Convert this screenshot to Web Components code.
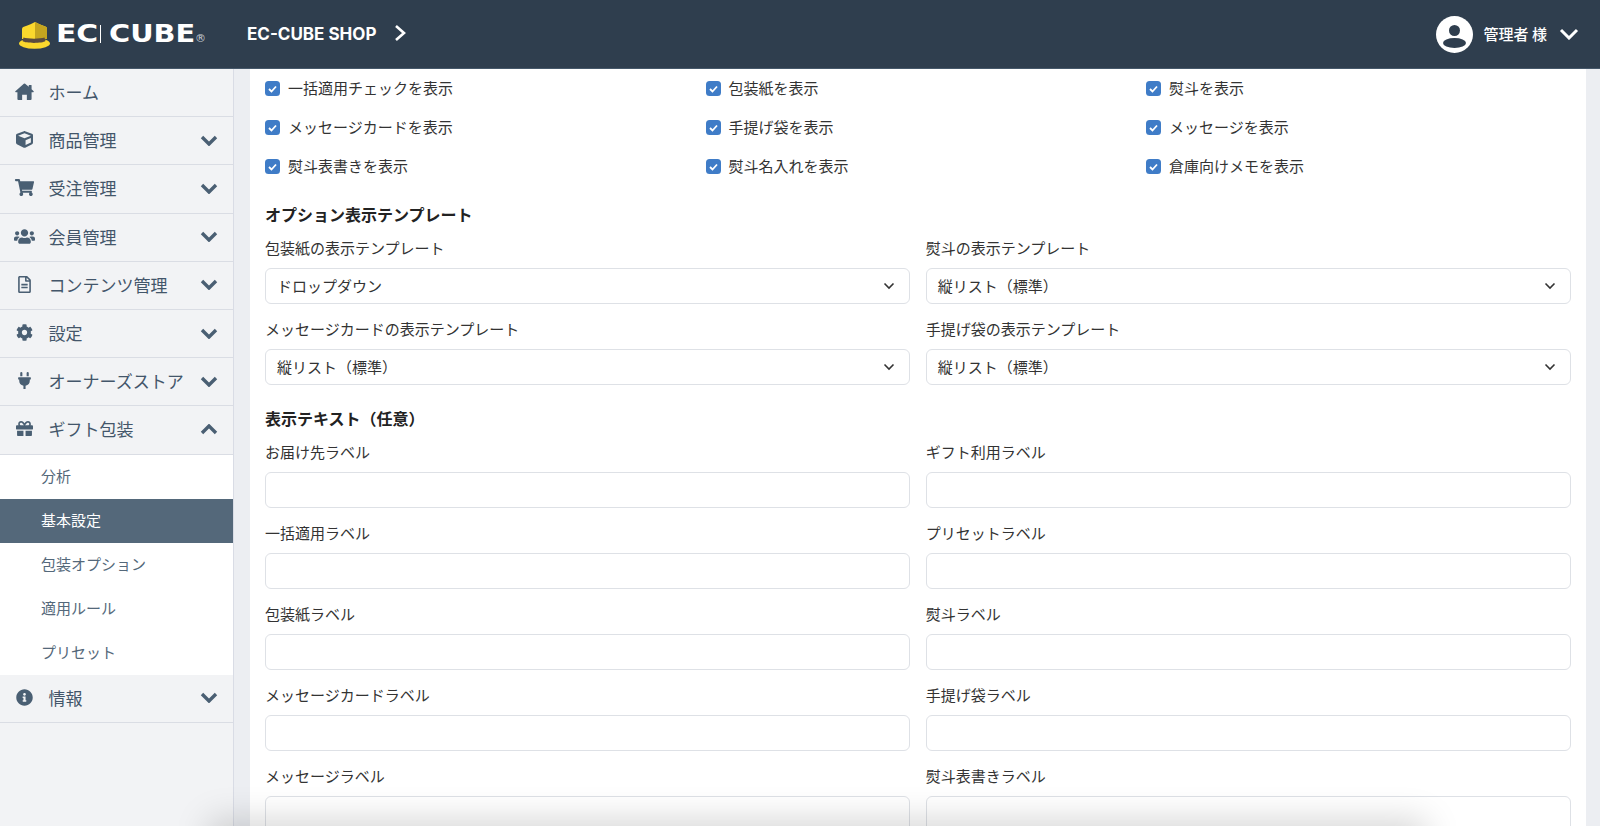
<!DOCTYPE html>
<html lang="ja">
<head>
<meta charset="UTF-8">
<title>EC-CUBE 基本設定</title>
<style>
    html, body { margin: 0; height: 100%; overflow: hidden; }
    body { font-family: "Noto Sans CJK JP", "Noto Sans", sans-serif; color: #333; background: #eceef2; }
</style>
</head>
<body>
<ec-app>
    <ec-header slot="header"></ec-header>
    <ec-sidebar slot="side">
        <ec-nav-item icon="home" plain>ホーム</ec-nav-item>
        <ec-nav-item icon="cube">商品管理</ec-nav-item>
        <ec-nav-item icon="cart">受注管理</ec-nav-item>
        <ec-nav-item icon="users">会員管理</ec-nav-item>
        <ec-nav-item icon="file">コンテンツ管理</ec-nav-item>
        <ec-nav-item icon="cog">設定</ec-nav-item>
        <ec-nav-item icon="plug">オーナーズストア</ec-nav-item>
        <ec-nav-item icon="gift" open>ギフト包装</ec-nav-item>
        <ec-sub-item first>分析</ec-sub-item>
        <ec-sub-item active>基本設定</ec-sub-item>
        <ec-sub-item>包装オプション</ec-sub-item>
        <ec-sub-item>適用ルール</ec-sub-item>
        <ec-sub-item>プリセット</ec-sub-item>
        <ec-nav-item icon="info">情報</ec-nav-item>
    </ec-sidebar>
    <ec-panel slot="main">
        <ec-checks>
            <ec-check>一括適用チェックを表示</ec-check>
            <ec-check>包装紙を表示</ec-check>
            <ec-check>熨斗を表示</ec-check>
            <ec-check>メッセージカードを表示</ec-check>
            <ec-check>手提げ袋を表示</ec-check>
            <ec-check>メッセージを表示</ec-check>
            <ec-check>熨斗表書きを表示</ec-check>
            <ec-check>熨斗名入れを表示</ec-check>
            <ec-check>倉庫向けメモを表示</ec-check>
        </ec-checks>
        <ec-heading style="margin-top:18px">オプション表示テンプレート</ec-heading>
        <ec-fields>
            <ec-field label="包装紙の表示テンプレート" value="ドロップダウン"></ec-field>
            <ec-field label="熨斗の表示テンプレート" value="縦リスト（標準）"></ec-field>
            <ec-field label="メッセージカードの表示テンプレート" value="縦リスト（標準）"></ec-field>
            <ec-field label="手提げ袋の表示テンプレート" value="縦リスト（標準）"></ec-field>
        </ec-fields>
        <ec-heading style="margin-top:8px">表示テキスト（任意）</ec-heading>
        <ec-fields>
            <ec-field label="お届け先ラベル"></ec-field>
            <ec-field label="ギフト利用ラベル"></ec-field>
            <ec-field label="一括適用ラベル"></ec-field>
            <ec-field label="プリセットラベル"></ec-field>
            <ec-field label="包装紙ラベル"></ec-field>
            <ec-field label="熨斗ラベル"></ec-field>
            <ec-field label="メッセージカードラベル"></ec-field>
            <ec-field label="手提げ袋ラベル"></ec-field>
            <ec-field label="メッセージラベル"></ec-field>
            <ec-field label="熨斗表書きラベル"></ec-field>
        </ec-fields>
    </ec-panel>
</ec-app>

<script>
    // アイコン: viewBox と path のセット
    const ICONS = {
        home: ['0 0 20 18', 'M10 .5a1 1 0 0 1 .7.3L14.500 4V2.500a.5.5 0 0 1 .5-.5h2a.5.5 0 0 1 .5.5V6.700l2.200 2a.6.6 0 0 1-.4 1H17.500V17a1 1 0 0 1-1 1H12.500V12.500h-5V18H3.500a1 1 0 0 1-1-1V9.700H.7a.6.6 0 0 1-.4-1L9.300.8a1 1 0 0 1 .7-.3z'],
        cube: ['0 0 512 512', 'M239.1 6.3l-208 78c-18.7 7-31.1 25-31.1 45v225.1c0 18.2 10.3 34.8 26.5 42.9l208 104c13.5 6.8 29.4 6.8 42.9 0l208-104c16.3-8.1 26.5-24.8 26.5-42.9V129.3c0-20-12.4-37.9-31.1-44.9l-208-78C262 2.2 250 2.2 239.1 6.3zM256 68.4l192 72v1.1l-192 78-192-78v-1.1l192-72zm32 356V275.5l160-65v133.9l-160 80z'],
        cart: ['0 0 576 512', 'M528.12 301.319l47.273-208C578.806 78.301 567.391 64 551.99 64H159.208l-9.166-44.81C147.758 8.021 137.93 0 126.529 0H24C10.745 0 0 10.745 0 24v16c0 13.255 10.745 24 24 24h69.883l70.248 343.435C147.325 417.1 136 435.222 136 456c0 30.928 25.072 56 56 56s56-25.072 56-56c0-15.674-6.447-29.835-16.824-40h209.647C430.447 426.165 424 440.326 424 456c0 30.928 25.072 56 56 56s56-25.072 56-56c0-22.172-12.888-41.332-31.579-50.405l5.517-24.276c3.413-15.018-8.002-29.319-23.403-29.319H218.117l-6.545-32h293.145c11.206 0 20.92-7.754 23.403-18.681z'],
        users: ['0 0 640 512', 'M96 224c35.3 0 64-28.7 64-64s-28.7-64-64-64-64 28.7-64 64 28.7 64 64 64zm448 0c35.3 0 64-28.7 64-64s-28.7-64-64-64-64 28.7-64 64 28.7 64 64 64zm32 32h-64c-17.6 0-33.5 7.1-45.1 18.6 40.3 22.1 68.9 62 75.1 109.4h66c17.7 0 32-14.3 32-32v-32c0-35.3-28.7-64-64-64zm-256 0c61.9 0 112-50.1 112-112S381.9 32 320 32 208 82.1 208 144s50.1 112 112 112zm76.8 32h-8.3c-20.8 10-43.9 16-68.5 16s-47.6-6-68.5-16h-8.3C179.6 288 128 339.6 128 403.2V432c0 26.5 21.5 48 48 48h288c26.5 0 48-21.5 48-48v-28.8c0-63.6-51.6-115.2-115.2-115.2zm-223.7-13.4C161.5 263.1 145.6 256 128 256H64c-35.3 0-64 28.7-64 64v32c0 17.7 14.3 32 32 32h65.9c6.3-47.4 34.9-87.3 75.2-109.4z'],
        file: ['0 0 384 512', 'M288 248v28c0 6.6-5.4 12-12 12H108c-6.6 0-12-5.4-12-12v-28c0-6.6 5.4-12 12-12h168c6.6 0 12 5.4 12 12zm-12 72H108c-6.6 0-12 5.4-12 12v28c0 6.6 5.4 12 12 12h168c6.6 0 12-5.4 12-12v-28c0-6.6-5.4-12-12-12zm108-188.1V464c0 26.5-21.5 48-48 48H48c-26.5 0-48-21.5-48-48V48C0 21.5 21.5 0 48 0h204.1C264.8 0 277 5.1 286 14.1L369.9 98c9 8.9 14.1 21.2 14.1 33.9zm-128-80V128h76.1L256 51.9zM336 464V176H232c-13.3 0-24-10.7-24-24V48H48v416h288z'],
        cog: ['0 0 512 512', 'M487.4 315.7l-42.6-24.6c4.3-23.2 4.3-47 0-70.2l42.6-24.6c4.9-2.8 7.1-8.6 5.5-14-11.1-35.6-30-67.8-54.7-94.6-3.8-4.1-10-5.1-14.8-2.3L380.8 110c-17.9-15.4-38.5-27.3-60.8-35.1V25.8c0-5.6-3.9-10.5-9.4-11.7-36.7-8.2-74.3-7.8-109.2 0-5.5 1.2-9.4 6.1-9.4 11.7V75c-22.2 7.9-42.8 19.8-60.8 35.1L88.7 85.5c-4.9-2.8-11-1.9-14.8 2.3-24.7 26.7-43.6 58.9-54.7 94.6-1.7 5.4.6 11.2 5.5 14L67.3 221c-4.3 23.2-4.3 47 0 70.2l-42.6 24.6c-4.9 2.8-7.1 8.6-5.5 14 11.1 35.6 30 67.8 54.7 94.6 3.8 4.1 10 5.1 14.8 2.3l42.6-24.6c17.9 15.4 38.5 27.3 60.8 35.1v49.2c0 5.6 3.9 10.5 9.4 11.7 36.7 8.2 74.3 7.8 109.2 0 5.5-1.2 9.4-6.1 9.4-11.7v-49.2c22.2-7.9 42.8-19.8 60.8-35.1l42.6 24.6c4.9 2.8 11 1.9 14.8-2.3 24.7-26.7 43.6-58.9 54.7-94.6 1.5-5.5-.7-11.3-5.6-14.1zM256 336c-44.1 0-80-35.9-80-80s35.9-80 80-80 80 35.9 80 80-35.9 80-80 80z'],
        plug: ['0 0 384 512', 'M320 32a32 32 0 0 0-64 0v96h64Zm48 128H16A16 16 0 0 0 0 176v32a16 16 0 0 0 16 16H32v32A160.07 160.07 0 0 0 160 412.8V512h64V412.8A160.07 160.07 0 0 0 352 256V224h16a16 16 0 0 0 16-16V176A16 16 0 0 0 368 160ZM128 32a32 32 0 0 0-64 0v96h64Z'],
        gift: ['0 0 512 512', 'M32 448c0 17.7 14.3 32 32 32h160V320H32v128zm256 32h160c17.7 0 32-14.3 32-32V320H288v160zm192-320h-42.1c6.2-12.1 10.1-25.5 10.1-40 0-48.5-39.5-88-88-88-41.6 0-68.5 21.3-103 68.3-34.5-47-61.4-68.3-103-68.3-48.5 0-88 39.5-88 88 0 14.5 3.8 27.9 10.1 40H32c-17.7 0-32 14.3-32 32v80c0 8.8 7.2 16 16 16h480c8.8 0 16-7.2 16-16v-80c0-17.7-14.3-32-32-32zm-326.1 0c-22.1 0-40-17.9-40-40s17.9-40 40-40c19.9 0 34.6 3.3 86.1 80h-86.1zm206.1 0h-86.1c51.4-76.5 65.7-80 86.1-80 22.1 0 40 17.9 40 40s-17.9 40-40 40z'],
        info: ['0 0 512 512', 'M256 8C119.043 8 8 119.083 8 256c0 136.997 111.043 248 248 248s248-111.003 248-248C504 119.083 392.957 8 256 8zm0 110c23.196 0 42 18.804 42 42s-18.804 42-42 42-42-18.804-42-42 18.804-42 42-42zm56 254c0 6.627-5.373 12-12 12h-88c-6.627 0-12-5.373-12-12v-24c0-6.627 5.373-12 12-12h12v-64h-12c-6.627 0-12-5.373-12-12v-24c0-6.627 5.373-12 12-12h64c6.627 0 12 5.373 12 12v100h12c6.627 0 12 5.373 12 12v24z']
    };

    const iconSvg = (name) => {
        const [box, d] = ICONS[name];
        return `<svg viewBox="${box}" fill="currentColor"><path d="${d}"/></svg>`;
    };

    // shadow root を作るだけの共通クラス
    class Base extends HTMLElement {
        constructor() {
            super();
            this.attachShadow({ mode: 'open' });
        }
    }

    class EcApp extends Base {
        connectedCallback() {
            this.shadowRoot.innerHTML = `
            <style>
                :host { display: grid; grid-template-columns: 234px 1fr; grid-template-rows: 69px 757px; height: 826px; position: relative; overflow: hidden; }
                .top { grid-column: 1 / 3; }
                .main { padding: 0 14px 0 16px; min-width: 0; overflow: hidden; }
                .dim { position: absolute; left: 215px; width: 1205px; bottom: -30px; height: 30px; box-shadow: 0 0 34px 6px rgba(0,0,0,.17); pointer-events: none; }
            </style>
            <div class="top"><slot name="header"></slot></div>
            <slot name="side"></slot>
            <div class="main"><slot name="main"></slot></div>
            <div class="dim"></div>`;
        }
    }

    class EcHeader extends Base {
        connectedCallback() {
            this.shadowRoot.innerHTML = `
            <style>
                :host { display: flex; align-items: center; height: 68px; border-bottom: 1px solid #46586a; background: #2f3e4e; color: #fff; padding: 0 21px 0 19px; }
                .hat { width: 31px; height: 27px; flex: none; margin: 2px 6px 0 0; }
                .logo { display: flex; align-items: center; width: 150px; height: 20px; flex: none; font-family: "DejaVu Sans", sans-serif; font-size: 24px; line-height: 20px; }
                .logo b { display: block; font-weight: 700; transform-origin: left center; white-space: nowrap; }
                .ec { width: 44px; transform: scaleX(1.24); }
                .bar { width: 1px; height: 18px; background: #fff; flex: none; margin-right: 8px; }
                .cube { width: 86px; transform: scaleX(1.2); }
                .reg { font-size: 11px; margin: 10px 0 0 1px; color: #c8cdd2; }
                .shop { font-family: Inter, "Noto Sans", sans-serif; font-weight: 700; font-size: 17px; margin-left: 41px; }
                .go { width: 12px; height: 18px; margin: -3px 0 0 18px; }
                .me { margin-left: auto; display: flex; align-items: center; }
                .avatar { width: 37px; height: 37px; }
                .name { font-size: 15px; font-weight: 500; margin: -2px 12px 0 11px; white-space: pre; }
                .down { width: 20px; height: 12px; }
            </style>
            <svg class="hat" viewBox="0 0 31 27">
                <ellipse cx="15.500" cy="21.500" rx="15.500" ry="5.200" fill="#fbd82d"/>
                <path d="M3 7C3 5 5 4.500 7 4c3-1 6-2.500 9-4 3 1.500 6 3 9 4 2 .5 3 1 3 3v10H3z" fill="#fbd82d"/>
                <path d="M16 0c3 1.500 6 3 9 4 2 .5 3 1 3 3v10H16z" fill="#c5a51f"/>
                <path d="M4.500 15.500c4 1.500 17 1.500 21 0l1 3.500c-3 2.500-20 2.500-23 0z" fill="#5a4b3e"/>
            </svg>
            <div class="logo"><b class="ec">EC</b><span class="bar"></span><b class="cube">CUBE</b><span class="reg">®</span></div>
            <span class="shop">EC-CUBE SHOP</span>
            <svg class="go" viewBox="0 0 12 18" fill="none" stroke="#fff" stroke-width="2.600"><path d="M2 2l8 7-8 7"/></svg>
            <div class="me">
                <svg class="avatar" viewBox="0 0 37 37">
                    <circle cx="18.500" cy="18.500" r="18.500" fill="#fff"/>
                    <circle cx="18.500" cy="14.500" r="5.500" fill="#2f3e4e"/>
                    <ellipse cx="18.500" cy="27" rx="11.500" ry="5" fill="#2f3e4e"/>
                </svg>
                <span class="name">管理者 様</span>
                <svg class="down" viewBox="0 0 20 12" fill="none" stroke="#fff" stroke-width="3"><path d="M2 2l8 8 8-8"/></svg>
            </div>`;
        }
    }

    class EcSidebar extends Base {
        connectedCallback() {
            this.shadowRoot.innerHTML = `
            <style>
                :host { display: block; background: #f2f3f5; border-right: 1px solid #d9dce5; overflow: hidden; }
            </style>
            <slot></slot>`;
        }
    }

    class EcNavItem extends Base {
        connectedCallback() {
            const arrow = this.hasAttribute('plain') ? '' :
                `<svg class="arrow" viewBox="0 0 18 11" fill="none" stroke="currentColor" stroke-width="3.400"><path d="${this.hasAttribute('open') ? 'M2 9l7-7 7 7' : 'M2 2l7 7 7-7'}"/></svg>`;
            this.shadowRoot.innerHTML = `
            <style>
                :host { display: flex; align-items: center; box-sizing: border-box; height: 48.200px; padding: 0 15px 2px 0; border-bottom: 1px solid #dadde4; color: #43566a; font-size: 17px; }
                .icon { width: 48.500px; flex: none; display: flex; justify-content: center; color: #4a5f73; box-sizing: border-box; }
                .icon svg { height: 17px; width: 21px; display: block; }
                .arrow { width: 18px; height: 11px; margin: 1px 0 0 auto; color: #4a5f73; }
            </style>
            <span class="icon">${iconSvg(this.getAttribute('icon'))}</span>
            <slot></slot>
            ${arrow}`;
        }
    }

    class EcSubItem extends Base {
        connectedCallback() {
            this.shadowRoot.innerHTML = `
            <style>
                :host { display: flex; align-items: center; box-sizing: border-box; height: 44px; padding: 0 0 2px 41px; background: #fff; color: #54687a; font-size: 15px; }
                :host([active]) { background: #54687a; color: #fff; }
            </style>
            <slot></slot>`;
        }
    }

    class EcPanel extends Base {
        connectedCallback() {
            this.shadowRoot.innerHTML = `
            <style>
                :host { display: block; background: #fff; height: 100%; padding: 0 15.500px 0 15px; overflow: hidden; }
            </style>
            <slot></slot>`;
        }
    }

    class EcChecks extends Base {
        connectedCallback() {
            this.shadowRoot.innerHTML = `
            <style>
                :host { display: grid; grid-template-columns: repeat(3, 440.500px); grid-auto-rows: 39px; }
            </style>
            <slot></slot>`;
        }
    }

    class EcCheck extends Base {
        connectedCallback() {
            this.shadowRoot.innerHTML = `
            <style>
                :host { display: flex; align-items: center; font-size: 15px; color: #333; }
                .box { width: 15px; height: 15px; border-radius: 3.500px; background: #3f7cc7; margin-right: 8px; flex: none; display: flex; align-items: center; justify-content: center; }
                .box svg { width: 9px; height: 8px; }
                .text { margin-top: -2px; }
            </style>
            <span class="box"><svg viewBox="0 0 9 8" fill="none" stroke="#fff" stroke-width="1.800"><path d="M1 4l2.500 2.500L8 1.500"/></svg></span>
            <span class="text"><slot></slot></span>`;
        }
    }

    class EcHeading extends Base {
        connectedCallback() {
            this.shadowRoot.innerHTML = `
            <style>
                :host { display: block; font-size: 16px; font-weight: 700; line-height: 20px; color: #222; margin-bottom: 14px; }
            </style>
            <slot></slot>`;
        }
    }

    class EcFields extends Base {
        connectedCallback() {
            this.shadowRoot.innerHTML = `
            <style>
                :host { display: grid; grid-template-columns: 1fr 1fr; column-gap: 16px; }
            </style>
            <slot></slot>`;
        }
    }

    class EcField extends Base {
        connectedCallback() {
            const value = this.getAttribute('value');
            const arrow = value ? `<svg viewBox="0 0 12 8" fill="none" stroke="#333" stroke-width="1.600"><path d="M1.500 1.500 6 6l4.500-4.500"/></svg>` : '';
            this.shadowRoot.innerHTML = `
            <style>
                :host { display: block; margin-bottom: 15px; min-width: 0; }
                label { display: block; font-size: 15px; line-height: 20px; color: #333; margin-bottom: 10px; }
                .control { display: flex; align-items: center; justify-content: space-between; height: 36px; box-sizing: border-box; border: 1px solid #dee1e6; border-top-width: 1.500px; border-bottom-width: 1.500px; border-radius: 6px; background: #fff; padding: 0 13.500px 0 11px; font-size: 15px; color: #333; }
                span { margin-top: -2px; }
                svg { width: 12px; height: 8px; }
            </style>
            <label>${this.getAttribute('label')}</label>
            <div class="control"><span>${value || ''}</span>${arrow}</div>`;
        }
    }

    customElements.define('ec-app', EcApp);
    customElements.define('ec-header', EcHeader);
    customElements.define('ec-sidebar', EcSidebar);
    customElements.define('ec-nav-item', EcNavItem);
    customElements.define('ec-sub-item', EcSubItem);
    customElements.define('ec-panel', EcPanel);
    customElements.define('ec-checks', EcChecks);
    customElements.define('ec-check', EcCheck);
    customElements.define('ec-heading', EcHeading);
    customElements.define('ec-fields', EcFields);
    customElements.define('ec-field', EcField);
</script>
</body>
</html>
